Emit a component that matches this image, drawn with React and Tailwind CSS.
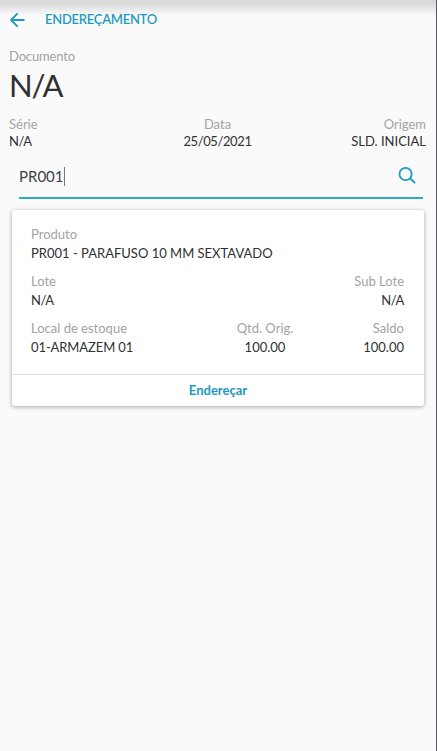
import React, { useState } from "react";

// Label on top, value below
const Field = ({ label, value, className = "", labelClass = "", valueClass = "" }) => {
  return (
    <div className={className}>
      <p className={`text-[#a3a3a3] ${labelClass}`}>{label}</p>
      <p className={`text-[#303030] ${valueClass}`}>{value}</p>
    </div>
  );
};

const BackIcon = () => (
  <svg width="16" height="16" viewBox="0 0 16 16" fill="none" stroke="#1f9ac0" strokeWidth="1.8" strokeLinecap="round" strokeLinejoin="round">
    <path d="M14.8 8H2M8.2 1.8L2 8l6.2 6.2" />
  </svg>
);

const SearchIcon = () => (
  <svg width="18" height="18" viewBox="0 0 18 18" fill="none" stroke="#1f9ac0" strokeLinecap="round">
    <circle cx="7.6" cy="7" r="6.1" strokeWidth="1.8" />
    <path d="M12.2 11.6l4.3 4" strokeWidth="2" />
  </svg>
);

const App = () => {
  const [search] = useState("PR001");

  return (
    <div className="h-[751px] w-[437px] overflow-hidden border-r border-[#595765] bg-[#fafafa] font-['Lato','Open_Sans',sans-serif] text-[13px]">
      {/* Header */}
      <header className="flex h-10 items-center bg-linear-to-b from-[#d9d9d9] from-8% to-[#fafafa] to-38% pl-[9px]">
        <BackIcon />
        <h1 className="ml-5 text-[13px] font-semibold tracking-[-0.27px] text-[#1f9ac0]">ENDEREÇAMENTO</h1>
      </header>

      {/* Document info */}
      <section className="pr-[10px] pl-[9px] pt-[7px]">
        <Field
          label="Documento"
          value="N/A"
          labelClass="leading-[18px] tracking-[-0.15px]"
          valueClass="text-[31px] leading-[40px] font-normal tracking-[-1.2px]"
        />
        <div className="mt-[11px] grid grid-cols-3 leading-[17px]">
          <Field label="Série" value="N/A" valueClass="tracking-[-0.4px]" />
          <Field label="Data" value="25/05/2021" className="text-center" valueClass="tracking-[-0.4px]" />
          <Field label="Origem" value="SLD. INICIAL" className="text-right" />
        </div>
      </section>

      {/* Search */}
      <div className="mr-[13px] ml-[19px] mt-[8px] flex h-[41px] items-center justify-between border-b-2 border-[#30a8ca] pr-[7px] pb-[3px]">
        <div className="flex items-center text-[15px] text-[#404040]">
          <span>{search}</span>
          <span className="h-[19px] w-px bg-[#777]" />
        </div>
        <SearchIcon />
      </div>

      {/* Product card */}
      <article className="mt-[11px] mr-3 ml-3 rounded-[3px] bg-white shadow-[0_1px_4px_rgba(0,0,0,0.35)]">
        <div className="flex h-[164px] flex-col gap-[9px] pr-5 pl-[19px] pt-[15px] leading-[19px]">
          <Field label="Produto" value="PR001 - PARAFUSO 10 MM SEXTAVADO" />
          <div className="flex justify-between">
            <Field label="Lote" value="N/A" valueClass="tracking-[-0.4px]" />
            <Field label="Sub Lote" value="N/A" className="text-right" valueClass="tracking-[-0.4px]" />
          </div>
          <div className="grid grid-cols-[160px_148px_1fr]">
            <Field label="Local de estoque" value="01-ARMAZEM 01" valueClass="tracking-[-0.1px]" />
            <Field label="Qtd. Orig." value="100.00" className="text-center" />
            <Field label="Saldo" value="100.00" className="text-right" />
          </div>
        </div>
        <button className="block h-8 w-full border-t border-[#e2e2e2] text-[13px] font-bold text-[#1f9ac0]">
          Endereçar
        </button>
      </article>
    </div>
  );
};

export default App;
